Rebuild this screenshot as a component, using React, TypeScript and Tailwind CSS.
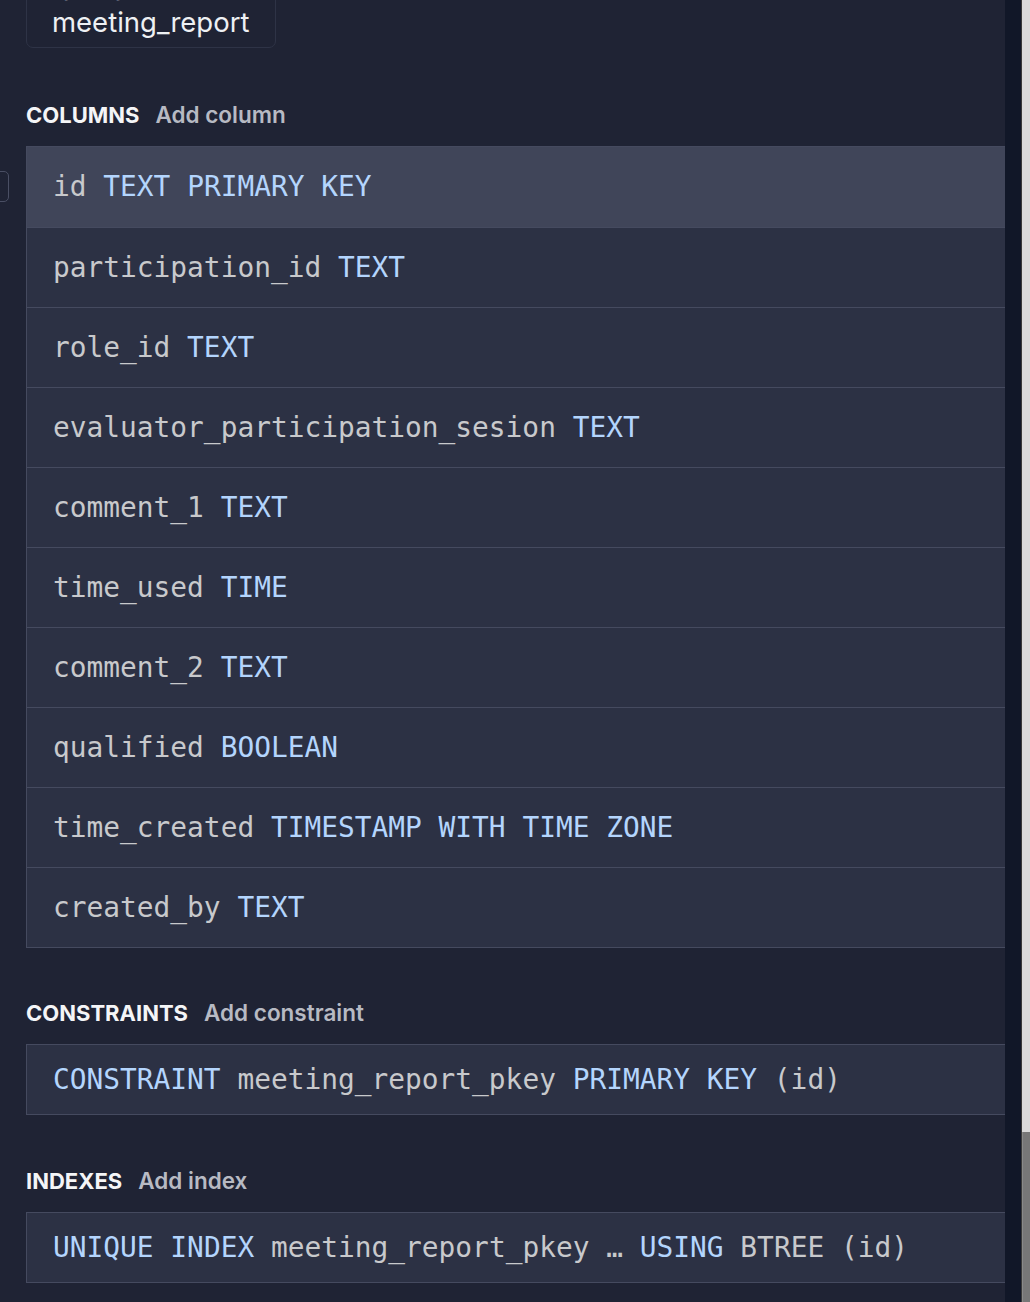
import React from "react";

type Tok = { t: string; k?: boolean };

const columns: Tok[][] = [
  [{ t: "id" }, { t: "TEXT", k: true }, { t: "PRIMARY", k: true }, { t: "KEY", k: true }],
  [{ t: "participation_id" }, { t: "TEXT", k: true }],
  [{ t: "role_id" }, { t: "TEXT", k: true }],
  [{ t: "evaluator_participation_sesion" }, { t: "TEXT", k: true }],
  [{ t: "comment_1" }, { t: "TEXT", k: true }],
  [{ t: "time_used" }, { t: "TIME", k: true }],
  [{ t: "comment_2" }, { t: "TEXT", k: true }],
  [{ t: "qualified" }, { t: "BOOLEAN", k: true }],
  [
    { t: "time_created" },
    { t: "TIMESTAMP", k: true },
    { t: "WITH", k: true },
    { t: "TIME", k: true },
    { t: "ZONE", k: true },
  ],
  [{ t: "created_by" }, { t: "TEXT", k: true }],
];

const constraint: Tok[] = [
  { t: "CONSTRAINT", k: true },
  { t: "meeting_report_pkey" },
  { t: "PRIMARY", k: true },
  { t: "KEY", k: true },
  { t: "(id)" },
];

const index: Tok[] = [
  { t: "UNIQUE", k: true },
  { t: "INDEX", k: true },
  { t: "meeting_report_pkey" },
  { t: "…" },
  { t: "USING", k: true },
  { t: "BTREE" },
  { t: "(id)" },
];

function Code({ toks }: { toks: Tok[] }) {
  return (
    <span className="whitespace-pre font-['DejaVu_Sans_Mono',monospace] text-[27.85px] leading-[34px]">
      {toks.map((tk, i) => (
        <React.Fragment key={i}>
          {i > 0 ? " " : ""}
          <span className={tk.k ? "text-[#b4d5fd]" : "text-[#c8c9cc]"}>{tk.t}</span>
        </React.Fragment>
      ))}
    </span>
  );
}

function Heading({ title, action }: { title: string; action: string }) {
  return (
    <div className="flex items-center gap-[16px] h-[24px] font-['Inter',sans-serif] text-[22px] leading-[24px]">
      <span className="font-bold text-[#f4f5f7]">{title}</span>
      <span className="font-semibold text-[#b7bac3] text-[22.5px]">{action}</span>
    </div>
  );
}

export default function App() {
  return (
    <div className="w-[1030px] h-[1302px] flex overflow-hidden bg-[#1f2334]">
      <div className="w-[1005px] shrink-0 flex bg-[#1f2334]">
        <div className="w-[26px] shrink-0">
          <div className="w-[20px] h-[31px] ml-[-11px] mt-[171px] rounded-[5px] border border-[#4a4f64]" />
        </div>
        <div className="flex-1 flex flex-col">
          <div className="w-[250px] mt-[-21px] rounded-[7px] border border-[#2e3346] px-[25px] pt-[4px] pb-[7px] font-['Inter',sans-serif]">
            <div className="text-[18px] leading-[20px] text-[#9aa0ad]">Table name</div>
            <div className="text-[27.5px] leading-[36px] text-[#eef0f3]">meeting_report</div>
          </div>

          <div className="mt-[55px]">
            <Heading title="COLUMNS" action="Add column" />
          </div>
          <div className="mt-[19px] border-l border-t border-b border-[#454a5f]">
            {columns.map((row, i) => (
              <div
                key={i}
                className={
                  "h-[80px] flex items-center pl-[26px] " +
                  (i > 0 ? "border-t border-[#454a5f] " : "") +
                  (i === 0 ? "bg-[#404559]" : "bg-[#2c3144]")
                }
              >
                <Code toks={row} />
              </div>
            ))}
          </div>

          <div className="mt-[53px]">
            <Heading title="CONSTRAINTS" action="Add constraint" />
          </div>
          <div className="mt-[19px] h-[71px] flex items-center pl-[26px] bg-[#2c3144] border-l border-t border-b border-[#454a5f]">
            <Code toks={constraint} />
          </div>

          <div className="mt-[54px]">
            <Heading title="INDEXES" action="Add index" />
          </div>
          <div className="mt-[19px] h-[71px] flex items-center pl-[26px] bg-[#2c3144] border-l border-t border-b border-[#454a5f]">
            <Code toks={index} />
          </div>
        </div>
      </div>
      <div className="w-[16px] shrink-0 bg-[#111728]" />
      <div className="w-[1px] shrink-0 bg-[#3a3a3a]" />
      <div className="flex-1 flex flex-col bg-[#dadada]">
        <div className="h-[1132px] shrink-0" />
        <div className="flex-1 bg-[#777777] border-l border-[#8a8a8a]" />
      </div>
    </div>
  );
}
